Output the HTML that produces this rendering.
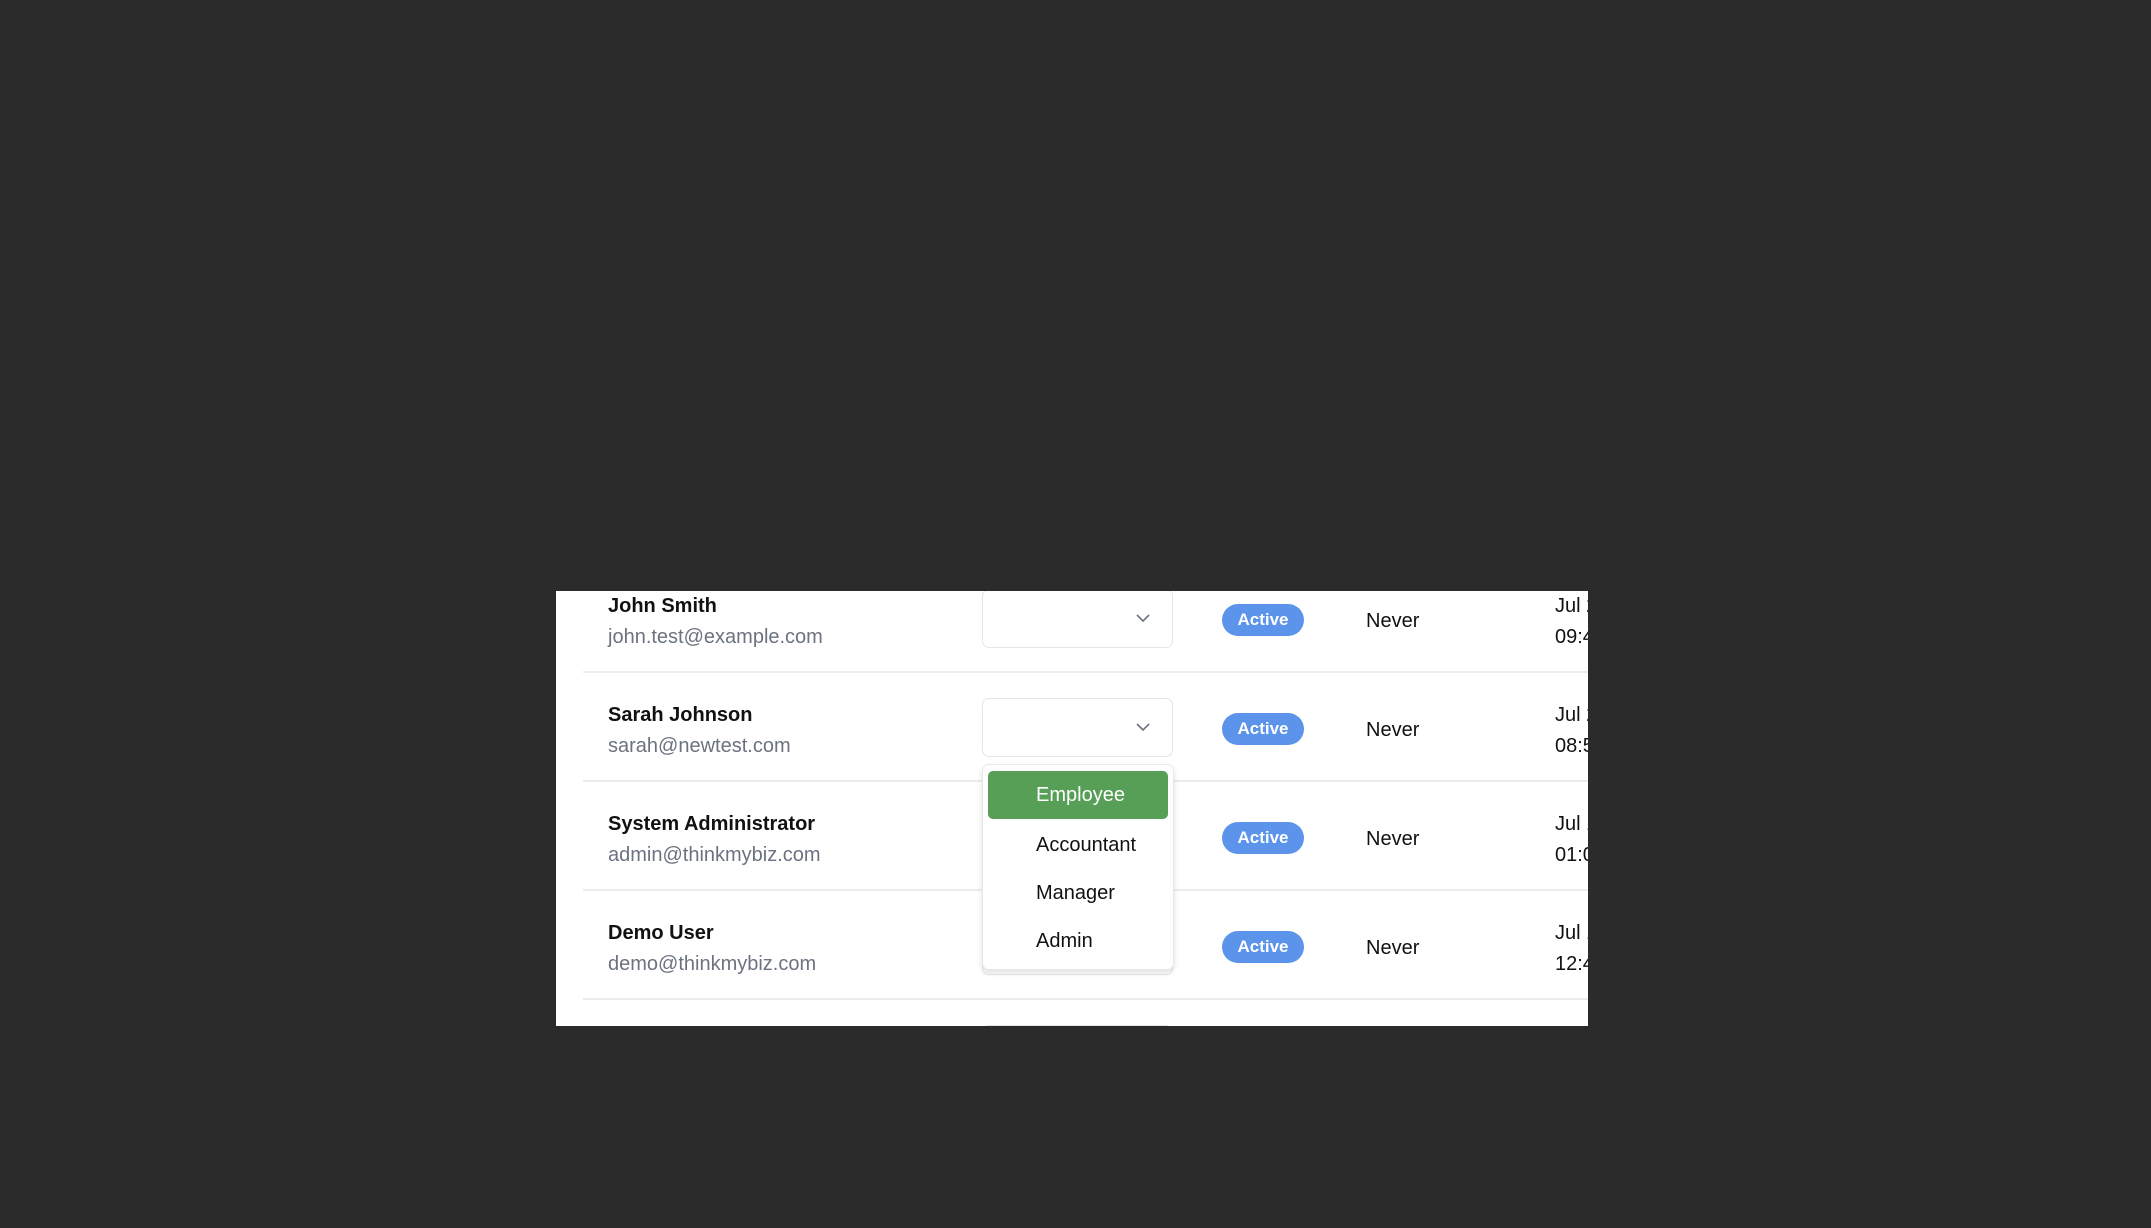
<!DOCTYPE html>
<html><head><meta charset="utf-8"><style>
html,body{margin:0;padding:0;}
body{width:2151px;height:1228px;background:#2b2b2b;position:relative;overflow:hidden;font-family:"Liberation Sans",sans-serif;}
#panel{position:absolute;left:556px;top:591px;width:1032px;height:435px;background:#fff;overflow:hidden;}
.row{position:absolute;left:0;width:1032px;height:109px;white-space:nowrap;}
.sep{position:absolute;left:27px;right:0;bottom:0;height:2px;background:#ececec;}
.name{position:absolute;left:52px;top:30px;font-size:20px;font-weight:bold;color:#111;line-height:24px;}
.email{position:absolute;left:52px;top:61px;font-size:20px;color:#6b7280;line-height:24px;}
.sel{position:absolute;left:426px;top:25px;width:189px;height:57px;border:1px solid #e3e5e8;border-radius:7px;background:#fff;}
.sel svg{position:absolute;left:152px;top:23px;}
.badge{position:absolute;left:666px;top:40px;width:82px;height:32px;border-radius:16px;background:#5b94ea;color:#fff;font-size:17px;font-weight:bold;text-align:center;line-height:32px;}
.never{position:absolute;left:810px;top:45px;font-size:20px;color:#111;line-height:24px;}
.d1{position:absolute;left:999px;top:30px;font-size:20px;color:#111;line-height:24px;white-space:nowrap;}
.d2{position:absolute;left:999px;top:61px;font-size:20px;color:#111;line-height:24px;white-space:nowrap;}
#dd{position:absolute;left:426px;top:173px;width:190px;height:204px;background:#fff;border:1px solid #e6e8eb;border-radius:7px;box-shadow:0 3px 6px rgba(0,0,0,0.12);}
.it{position:absolute;left:5px;width:180px;height:48px;line-height:48px;font-size:20px;color:#111;padding-left:48px;box-sizing:border-box;border-radius:5px;}
.it.on{background:#579f56;color:#fff;}
</style></head><body>
<div id="panel">
  <div class="row" style="top:-27px">
    <div class="name">John Smith</div><div class="email">john.test@example.com</div>
    <div class="sel"><svg width="16" height="10" viewBox="0 0 16 10"><path d="M2 2 L8 8 L14 2" fill="none" stroke="#6b7280" stroke-width="1.6"/></svg></div>
    <div class="badge">Active</div><div class="never">Never</div>
    <div class="d1">Jul 2</div><div class="d2">09:45</div><div class="sep"></div>
  </div>
  <div class="row" style="top:82px">
    <div class="name">Sarah Johnson</div><div class="email">sarah@newtest.com</div>
    <div class="sel"><svg width="16" height="10" viewBox="0 0 16 10"><path d="M2 2 L8 8 L14 2" fill="none" stroke="#6b7280" stroke-width="1.6"/></svg></div>
    <div class="badge">Active</div><div class="never">Never</div>
    <div class="d1">Jul 2</div><div class="d2">08:52</div><div class="sep"></div>
  </div>
  <div class="row" style="top:191px">
    <div class="name">System Administrator</div><div class="email">admin@thinkmybiz.com</div>
    <div class="badge">Active</div><div class="never">Never</div>
    <div class="d1">Jul 1</div><div class="d2">01:05</div><div class="sep"></div>
  </div>
  <div class="row" style="top:300px">
    <div class="name">Demo User</div><div class="email">demo@thinkmybiz.com</div>
    <div class="sel" style="height:57px;top:25px;border-color:#e8e8e8"></div>
    <div class="badge">Active</div><div class="never">Never</div>
    <div class="d1">Jul 1</div><div class="d2">12:45</div><div class="sep"></div>
  </div>
  <div class="row" style="top:409px">
    <div class="sel" style="top:25px"></div>
  </div>
  <div id="dd">
    <div class="it on" style="top:6px">Employee</div>
    <div class="it" style="top:56px">Accountant</div>
    <div class="it" style="top:104px">Manager</div>
    <div class="it" style="top:152px">Admin</div>
  </div>
</div>
</body></html>
